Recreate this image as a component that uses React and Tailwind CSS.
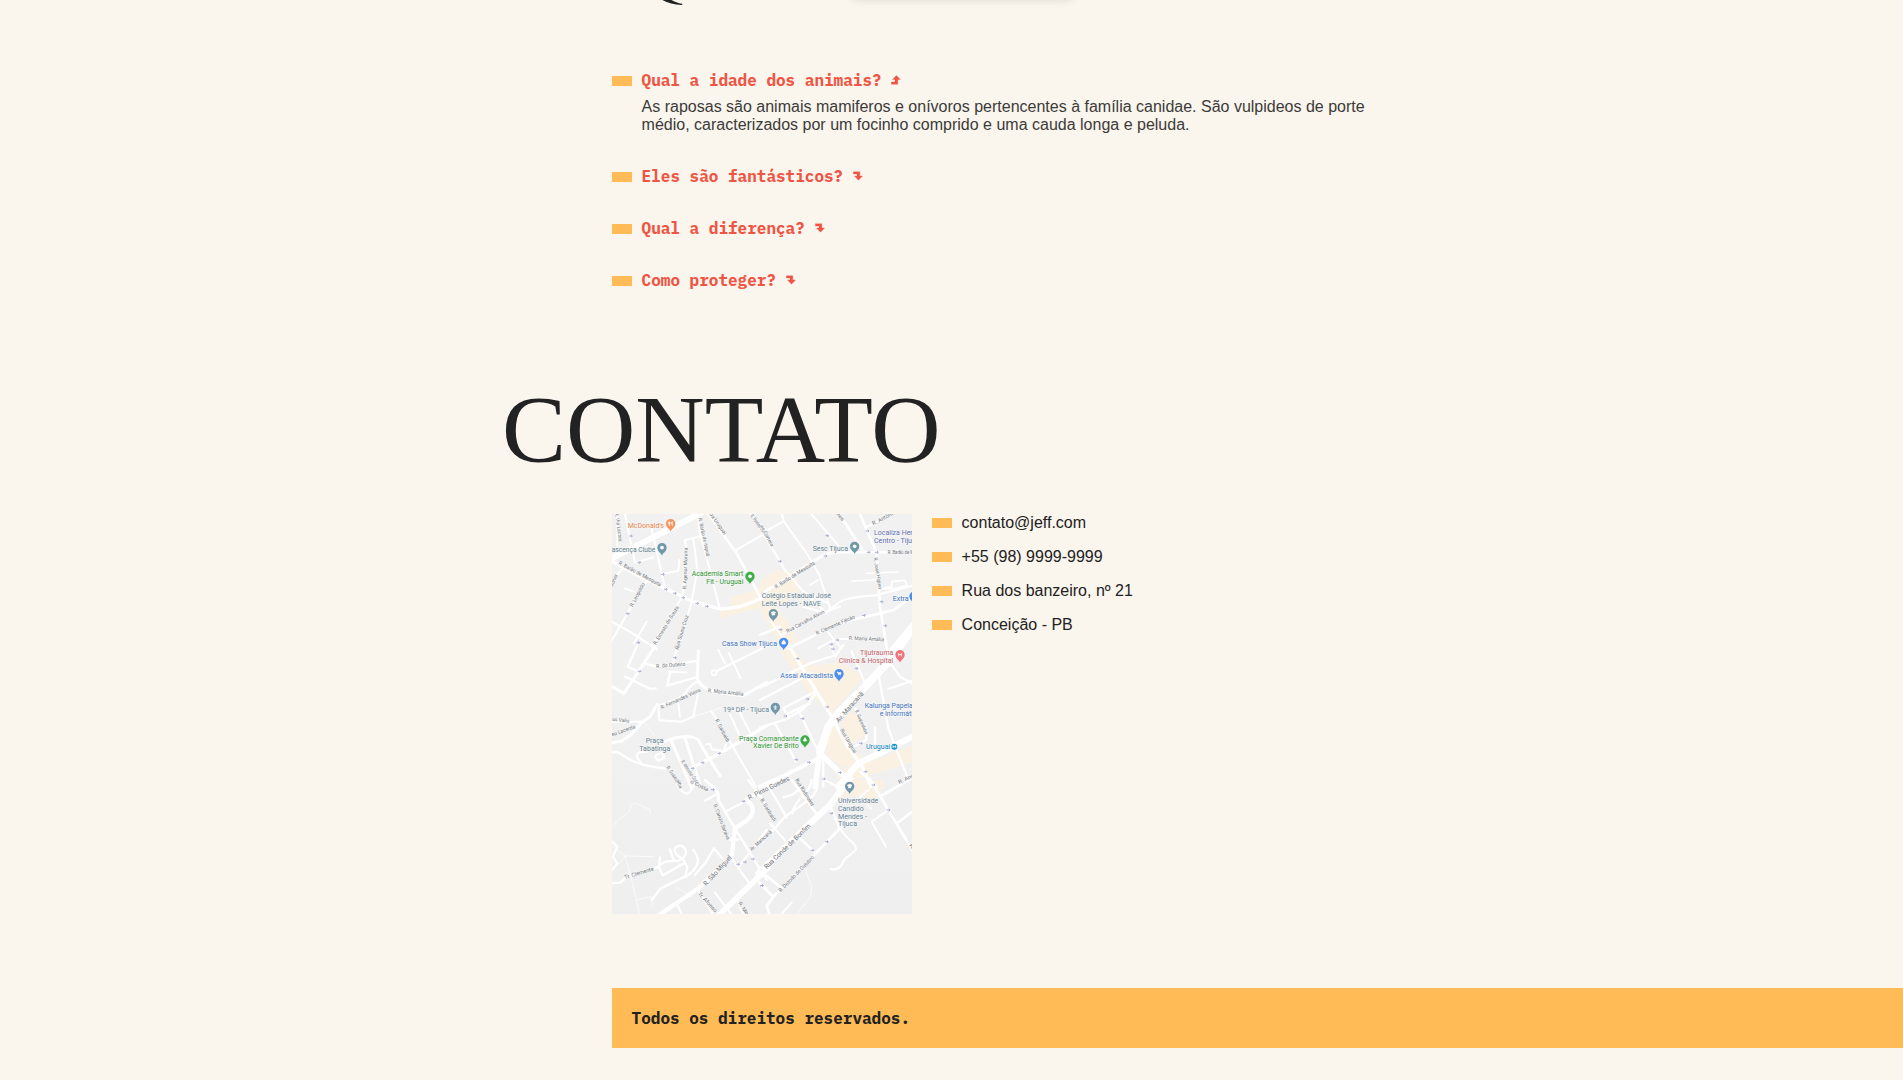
import React from 'react';

const SANS = 'font-["Liberation_Sans",Arial,sans-serif]';
const SERIF = 'font-["Liberation_Serif",serif]';
const MONO = 'font-["IBM_Plex_Mono","Liberation_Mono",monospace]';

/* Map tiles: every tile is drawn at three times its final size. */
const tiles = [
  {
    at: [-2, -4],
    land: ['330 300 330 325 465 290 465 228 400 250 360 263 362 285'],
    roads: [
      [18, 'M-5 150L100 97L275 8'],
      [10, 'M8 155L100 205L165 235L250 275L330 297C390 295 420 282 470 256'],
      [6, 'M22 10V110M45 12L75 158L130 142M125 58L165 235M165 190L205 183L208 150M225 90L270 80L263 10M225 90L229 120L218 258L125 410M250 85L262 180L245 275L203 420M264 20L268 60L330 297'],
      [8, 'M290 5L380 130L455 270'],
      [6, 'M375 122L470 68M418 8L470 64M112 208L5 392M45 235L85 250M5 335L60 365L140 418M110 335L72 400M0 220L30 185L45 170'],
    ],
  },
  {
    at: [148, -4],
    land: ['0 215 50 180 105 188 122 235 105 260 50 290 90 345 115 395 60 410 0 300'],
    roads: [
      [6, 'M-5 45L75 180L130 245L190 300M65 8L72 35L140 130L178 195L212 300M5 70L70 35M150 8L230 100L245 125M318 52L400 10M150 225L175 210M130 245L205 280M130 290L200 310'],
      [8, 'M15 245L150 160L200 130L250 126L470 128M235 8L312 126M298 8L350 128L360 290L382 425'],
      [5, 'M275 213L350 210M320 190L415 186M365 236L395 230L395 215L435 211L441 226L405 236Z'],
      [7, 'M215 296C240 270 255 262 345 256L470 224M0 375L60 350M70 372L215 298L240 290'],
      [8, 'M85 415L240 338L360 310L400 300L470 252'],
      [6, 'M203 365L245 415M175 415L210 395L240 386L380 392M30 330L90 415'],
      [22, 'M475 330L395 425'],
    ],
  },
  {
    at: [-2, 131],
    land: [],
    roads: [
      [7, 'M82 0L53 65L90 82M45 95L122 132L137 130M105 55L140 65L262 48M180 82L172 122L262 96M203 0L190 52M178 80L228 82'],
      [9, 'M138 0L42 145L2 122M265 18L262 100C270 130 300 142 400 152L470 112'],
      [6, 'M145 182C175 175 210 160 225 145Q240 120 265 108M145 182L148 226L215 230L250 215L265 140M205 175L210 215M2 230L95 230'],
      [2, 'M250 215L335 188M100 228L132 270'],
      [9, 'M142 178L120 215L98 230L62 270L35 288L2 294'],
      [6, 'M320 78L470 4M325 15L345 55M357 25L392 100'],
      [7, 'M2 325Q20 315 40 332Q85 365 180 372L210 425M95 355C70 330 78 320 110 320M140 330L157 323L163 338L145 347L136 336Z'],
      [9, 'M150 296C200 272 240 268 265 285L290 330L330 392M185 290L243 425M225 280L272 425'],
      [10, 'M240 372L330 325L470 242'],
      [6, 'M305 200L360 290L438 425M290 298L300 296L305 313L340 318L350 292M360 208L388 270M385 195L420 262'],
    ],
  },
  {
    at: [148, 131],
    land: [
      '60 20 90 0 130 45 160 62 240 50 310 95 250 165 215 205 150 150 110 90',
      '240 235 270 200 310 220 320 270 275 300 300 330 330 350 465 300 465 350 300 400 260 420 230 395 285 345',
      '195 300 225 235 290 345 250 370 205 335',
    ],
    roads: [
      [10, 'M85 0L215 215L260 300L310 370L332 425'],
      [7, 'M0 128L150 55L228 30L250 0M70 190L165 140M78 208L150 175M0 165L155 85M70 190L85 212M355 85L385 250L440 392M385 132L455 108M395 60L420 95L470 122M115 195L170 310M45 235L108 350M0 248L80 222L130 192L165 150M285 188L322 260L318 285L270 312M345 248L345 320M212 0L225 35M275 20L315 115M190 340L190 425M350 425L300 380'],
      [24, 'M475 -75L390 45L320 120L235 205L205 245L180 320'],
      [16, 'M180 315L165 425M180 325L250 392'],
      [19, 'M470 268L370 320L295 355L235 425'],
      [12, 'M0 425L80 388L175 340'],
      [6, 'M420 420L465 390'],
    ],
  },
  {
    at: [-2, 266],
    land: [],
    roads: [
      [7, 'M195 0C215 42 230 46 240 35L255 10M285 62L325 40M345 95L410 62M360 180L385 178M385 262L470 150M365 235L418 310M375 145L470 300M415 0L470 75'],
      [8, 'M285 0C305 20 330 30 325 60L375 145'],
      [13, 'M475 22L408 60C432 75 440 100 405 125L375 145L365 230L265 325L140 410'],
      [17, 'M320 412L475 262'],
      [6, 'M260 325L312 408M200 370L218 408M315 338L368 408M378 355L402 408M440 300L470 325'],
      [2, 'M10 140C30 100 65 110 62 75L75 70L120 88V102M45 228L130 230M10 200L45 228M20 260L45 228L65 300L88 400M80 360L122 350L128 380M195 320L245 350'],
      [7, 'M2 310L30 308L50 292L135 266L165 245L205 242C240 230 230 192 205 198C185 205 195 228 218 235L232 262L225 290L152 325L125 360M2 182L22 200L8 230L22 250L2 275M180 208L190 238M150 232L147 262L157 284M160 285L225 248M250 210C270 235 272 260 228 290M255 285L285 250L312 205L348 248'],
    ],
  },
  {
    at: [148, 266],
    land: ['195 75 260 0 370 0 372 20 330 75 305 45 250 50 215 85'],
    roads: [
      [7, 'M172 0C175 40 165 50 75 110L5 188M155 0C150 45 100 60 98 100M25 20L50 60L80 112M30 130L85 192M95 0L172 105M195 0L240 25M70 52L95 45L130 20'],
      [19, 'M-5 280L150 130L210 75L270 -5'],
      [8, 'M120 175L162 215M210 80L240 145M40 350L65 325L240 145L280 115M5 275L65 325M0 312L40 350L20 378L30 408'],
      [6, 'M240 145C260 180 292 190 287 210C270 230 250 230 245 255Q230 272 212 267M385 90L335 125L378 200M325 30L300 50L332 85M60 408L95 367'],
      [8, 'M328 -5L385 90L458 212M360 50L470 -15M410 130L470 85'],
      [2, 'M135 268L155 320L152 350L110 404'],
    ],
  },
];

const C = { slate: '#5f7f90', blue: '#3f74c0', green: '#2f9632', orange: '#e6854a', indigo: '#5f70b0', red: '#c05f66', cyan: '#0f85c0', street: '#6f7479' };

/* [tile, x, y, text, width, color, anchor] */
const places = [
  [0, 53, 53, "McDonald's", 109, C.orange],
  [0, 136, 125, 'ascença Clube', 131, C.slate, 'end'],
  [0, 400, 199, 'Academia Smart', 155, C.green, 'end'],
  [0, 400, 223, 'Fit - Uruguai', 111, C.green, 'end'],
  [1, 158, 122, 'Sesc Tijuca', 106, C.slate],
  [1, 342, 75, 'Localiza Hertz', 134, C.indigo],
  [1, 342, 98, 'Centro - Tijuca', 137, C.indigo],
  [1, 5, 265, 'Colégio Estadual José', 208, C.slate],
  [1, 5, 288, 'Leite Lopes - NAVE', 178, C.slate],
  [1, 398, 273, 'Extra', 48, C.blue],
  [1, 51, 409, 'Casa Show Tijuca', 165, C.blue, 'end'],
  [2, 107, 294, 'Praça', 54, C.slate],
  [2, 88, 317, 'Tabatinga', 93, C.slate],
  [3, 27, 200, '19ª DP - Tijuca', 138, C.slate, 'end'],
  [3, 116, 287, 'Praça Comandante', 179, C.green, 'end'],
  [3, 116, 309, 'Xavier De Brito', 137, C.green, 'end'],
  [3, 400, 31, 'Tijutrauma', 100, C.red, 'end'],
  [3, 400, 54, 'Clínica & Hospital', 164, C.red, 'end'],
  [3, 61, 99, 'Assaí Atacadista', 158, C.blue],
  [3, 314, 188, 'Kalunga Papelaria', 168, C.blue],
  [3, 359, 212, 'e Informática', 122, C.blue],
  [3, 318, 312, 'Uruguai', 73, C.cyan],
  [5, 234, 69, 'Universidade', 121, C.slate],
  [5, 234, 93, 'Candido', 77, C.slate],
  [5, 234, 116, 'Mendes -', 87, C.slate],
  [5, 234, 139, 'Tijuca', 57, C.slate],
];

/* [tile, x1, y1, x2, y2, name, size] */
const streets = [
  [0, 15, 8, 27, 95, 'R. Via Láctea', 15],
  [0, 25, 162, 150, 230, 'R. Barão de Mesquita', 16],
  [0, 229, 238, 233, 113, 'R. Agenor Moreira', 15],
  [0, 265, 25, 290, 140, 'R. Barão de Itapoã', 15],
  [0, 292, 5, 342, 75, 'Rua Uruguai', 16],
  [0, 68, 292, 105, 222, 'R. Leopoldo', 16],
  [0, 138, 405, 207, 292, 'R. Ernesto de Souza', 16],
  [0, 204, 418, 236, 318, 'Rua Sousa Cruz', 16],
  [0, 420, 18, 470, 85, 'R. Pontes Correia', 16],
  [0, 8, 230, 24, 195, 'Júnior', 16],
  [1, 0, 48, 33, 110, 'es Correia', 15],
  [1, 48, 236, 166, 162, 'R. Barão de Mesquita', 16],
  [1, 340, 46, 408, 10, 'R. Antônio', 16],
  [1, 383, 132, 475, 132, 'R. Barão de Mes', 15],
  [1, 341, 143, 356, 238, 'R. José Higino', 15],
  [1, 82, 369, 195, 309, 'Rua Carvalho Alvim', 16],
  [1, 170, 375, 286, 324, 'R. Clemente Falcão', 16],
  [1, 266, 389, 372, 394, 'R. Maria Amália', 16],
  [1, 228, 10, 246, 34, 'des', 15],
  [2, 139, 69, 226, 62, 'R. do Outeiro', 16],
  [2, 155, 193, 273, 139, 'R. Fernandes Vieira', 16],
  [2, 293, 142, 400, 152, 'R. Maria Amália', 16],
  [2, 6, 227, 58, 233, 'os Valis', 15],
  [2, 6, 274, 77, 249, 'eu Lacerda', 16],
  [2, 315, 226, 350, 292, 'R. Garibaldi', 16],
  [2, 212, 350, 260, 420, 'R. Amoroso Costa', 16],
  [2, 168, 368, 205, 420, 'R. Guaxupé', 16],
  [2, 205, 16, 212, 0, 'R.', 15],
  [3, 236, 234, 312, 147, 'Av. Maracanã', 20],
  [3, 285, 198, 316, 268, 'R. Guajaratuba', 15],
  [3, 240, 255, 282, 326, 'Rua Uruguai', 16],
  [3, 418, 417, 470, 392, 'R. Andr', 16],
  [4, 198, 0, 208, 26, 'olha', 15],
  [4, 240, 8, 292, 34, 'o Costa', 16],
  [4, 310, 75, 350, 180, 'R. Canuto Saraiva', 16],
  [4, 45, 297, 132, 271, 'Tr. Clemente', 16],
  [4, 289, 319, 366, 234, 'R. São Miguel', 20],
  [4, 263, 342, 315, 398, 'Tr. Afonso', 16],
  [4, 384, 370, 408, 405, 'R. Me', 16],
  [4, 425, 214, 486, 158, 'Av. Maracanã', 16],
  [4, 418, 60, 540, 0, 'R. Pinto Guedes', 20],
  [5, 0, 60, 40, 125, 'R. Garibaldi', 16],
  [5, 105, 0, 155, 80, 'Rua Radmaker', 16],
  [5, 20, 268, 153, 140, 'Rua Conde de Bonfim', 20],
  [5, 62, 337, 163, 233, 'R. Dezoito de Outubro', 16],
  [5, 448, 195, 458, 212, 'R.', 15],
];

/* [tile, x, y, color, mark] */
const pins = [
  [0, 182, 44, '#f5945b', 'fork'],
  [0, 156, 116, '#7197a9', 'dot'],
  [0, 420, 202, '#3fae49', 'dot'],
  [1, 284, 112, '#7197a9', 'dot'],
  [1, 40, 314, '#7197a9', 'cap'],
  [1, 71, 400, '#4c8df0', 'lock'],
  [1, 462, 262, '#4c8df0', 'dot'],
  [3, 420, 32, '#ee737b', 'H'],
  [3, 237, 89, '#4c8df0', 'cart'],
  [3, 46, 190, '#7197a9', 'star'],
  [3, 135, 288, '#3fae49', 'tree'],
  [5, 269, 22, '#7197a9', 'cap'],
];

const marks = {
  fork: 'M-4 -6V7M-6 -6V0H-2V-6M5 7V-6Q1 -3 3 1H5',
  cap: 'M-7 -3L0 -6L7 -3L0 0ZM-4 0V4H4V0',
  lock: 'M-5 -1H5V5H-5ZM-3 -1V-4Q0 -8 3 -4V-1',
  cart: 'M-7 -5H-4L-2 2H5L6 -3H-3M-2 6H-1M4 6H5',
  star: 'M-6 -1H6M0 -6V6M-4 5H4',
  tree: 'M0 -7L-5 2H5ZM0 2V6',
  H: 'M-4 -5V5M4 -5V5M-4 0H4',
};

/* [tile, x, y] one-way street markers */
const ticks = [
  [0, 62, 78], [0, 87, 157], [0, 158, 193], [0, 167, 238], [0, 194, 250], [0, 219, 263], [0, 261, 280], [0, 290, 289], [0, 52, 311], [0, 84, 398],
  [1, 201, 77], [1, 196, 138], [1, 59, 154], [1, 322, 63], [1, 325, 127], [1, 350, 127], [1, 364, 275], [1, 311, 316], [1, 375, 347], [1, 61, 359], [1, 231, 390], [1, 213, 403],
  [2, 88, 79], [2, 194, 38], [2, 327, 325], [2, 277, 353], [2, 247, 370],
  [3, 112, 41], [3, 218, 12], [3, 289, 70], [3, 142, 162], [3, 76, 213], [3, 127, 221], [3, 201, 186], [3, 302, 295], [3, 146, 352], [3, 108, 344], [3, 239, 383], [3, 191, 402], [3, 316, 380],
  [4, 308, 29], [4, 400, 64], [4, 384, 253], [4, 404, 246], [4, 428, 237], [4, 455, 317],
  [5, 340, 15], [5, 385, 90], [5, 214, 100], [5, 200, 185], [5, 157, 211], [5, 5, 317],
];

function tileMatrix(i) {
  const [x, y] = tiles[i].at;
  return `translate(${x} ${y}) scale(0.33333)`;
}

function StreetMap() {
  return (
    <svg className="block h-[400px] w-[300px] shrink-0" viewBox="0 0 300 400" role="img" aria-label="Mapa">
      <defs>
        <linearGradient id="ground" x1="0" y1="0" x2="0" y2="1">
          <stop offset="0.4" stopColor="#f1f1f2" />
          <stop offset="1" stopColor="#efefef" />
        </linearGradient>
      </defs>
      <rect width="300" height="400" fill="url(#ground)" />
      {tiles.map((t, i) => (
        <g key={i} transform={tileMatrix(i)} fill="#faf1e2">
          {t.land.map((p) => <polygon key={p} points={p} />)}
        </g>
      ))}
      {tiles.map((t, i) => (
        <g key={i} transform={tileMatrix(i)} fill="none" stroke="#fff" strokeLinecap="round" strokeLinejoin="round">
          {t.roads.map(([w, d]) => <path key={d} d={d} strokeWidth={w} />)}
        </g>
      ))}
      <circle cx="102" cy="158.7" r="2.4" fill="#f1f1f2" stroke="#fff" strokeWidth="1.6" />
      {ticks.map(([t, x, y]) => (
        <g key={`${t}-${x}-${y}`} transform={tileMatrix(t)}>
          <path d={`M${x - 5} ${y}h10m-4 -4l4 4l-4 4`} fill="none" stroke="#a9add0" strokeWidth="3" />
        </g>
      ))}
      <g className='font-["Roboto",sans-serif]'>
        {streets.map(([t, x1, y1, x2, y2, name, size]) => {
          const angle = (Math.atan2(y2 - y1, x2 - x1) * 180) / Math.PI;
          return (
            <g key={`${t}${x1}${name}`} transform={tileMatrix(t)}>
              <text
                transform={`translate(${x1} ${y1}) rotate(${angle})`}
                fontSize={size}
                textLength={Math.hypot(x2 - x1, y2 - y1)}
                lengthAdjust="spacingAndGlyphs"
                fill={C.street}
                stroke="#f8f8f8"
                strokeWidth="3"
                paintOrder="stroke"
              >
                {name}
              </text>
            </g>
          );
        })}
        {places.map(([t, x, y, name, width, color, anchor]) => (
          <g key={`${t}${y}${name}`} transform={tileMatrix(t)}>
            <text
              x={anchor === 'end' ? x - width : x}
              y={y}
              fontSize="20.5"
              textLength={width}
              lengthAdjust="spacingAndGlyphs"
              fill={color}
              stroke="#f8f8f8"
              strokeWidth="3"
              paintOrder="stroke"
            >
              {name}
            </text>
          </g>
        ))}
      </g>
      {pins.map(([t, x, y, color, mark]) => (
        <g key={`${t}${x}${y}`} transform={tileMatrix(t)}>
          <g transform={`translate(${x} ${y})`}>
            <path d="M0 21C-2 12 -14 9 -14 -3A14 14 0 0 1 14 -3C14 9 2 12 0 21Z" fill={color} />
            {mark === 'dot'
              ? <circle cy="-3" r="5.5" fill="#fff" />
              : <path d={marks[mark]} transform="translate(0 -3)" fill={mark === 'fork' || mark === 'H' || mark === 'star' ? 'none' : '#fff'} stroke="#fff" strokeWidth="2.4" />}
          </g>
        </g>
      ))}
      <g transform={tileMatrix(3)}>
        <circle cx="403" cy="305" r="9" fill="#1590c8" />
        <path d="M399 301v8m8 -8v8m-8 -4h8" stroke="#fff" strokeWidth="2.4" />
      </g>
    </svg>
  );
}

function Marker() {
  return <span className="mr-[9.6px] block h-[10px] w-5 shrink-0 bg-[#ffbb55]" />;
}

function Arrow({ open }) {
  return (
    <svg className="mb-[2px] ml-[9.8px] h-[10px] w-[10px] shrink-0" viewBox="0 0 10 10" fill="#ee5544" stroke="#ee5544" strokeWidth="0.3">
      {open
        ? <path d="M0.4 9.3V7H4V4.6H1.4L5.4 0.6L9.5 4.6H6.8V9.3Z" />
        : <path d="M0.4 0.7H6.8V5H9.5L5.5 9.2L1.5 5H4V3H0.4Z" />}
    </svg>
  );
}

function Question({ children, open, answer }) {
  return (
    <div>
      <button className={`${MONO} flex h-5 items-center text-[16px] leading-5 font-bold whitespace-pre text-[#ee5544]`}>
        <Marker />
        <span className="mb-[2px]">{children}</span>
        <Arrow open={open} />
      </button>
      {answer && (
        <p className="mt-[7px] mb-[33px] ml-[29.6px] w-[740px] text-[16px] leading-[18px] text-[#3c3b3a]">{answer}</p>
      )}
    </div>
  );
}

export default function App() {
  const contacts = ['contato@jeff.com', '+55 (98) 9999-9999', 'Rua dos banzeiro, nº 21', 'Conceição - PB'];
  return (
    <main className={`${SANS} relative flex h-[1080px] w-full flex-col overflow-hidden bg-[#faf5ed] text-[#222222]`}>
      <div className="absolute -top-[61px] left-[851px] h-[60px] w-[222px] rounded-[4px] bg-white shadow-[0_0_10px_rgba(0,0,0,0.14)]" />
      <svg className="ml-[660px] h-[6px] w-[24px] shrink-0" viewBox="0 0 24 6" fill="#222222">
        <path d="M2.3 0H11.5C14.5 1.8 18 3.2 22.2 3.8V4.9C14.5 5 8 3 2.3 0Z" />
      </svg>
      <section className="mt-[65px] ml-[612px] flex flex-col">
        <Question
          open
          answer="As raposas são animais mamiferos e onívoros pertencentes à família canidae. São vulpideos de porte médio, caracterizados por um focinho comprido e uma cauda longa e peluda."
        >
          Qual a idade dos animais?
        </Question>
        <div className="flex flex-col gap-8">
          <Question>Eles são fantásticos?</Question>
          <Question>Qual a diferença?</Question>
          <Question>Como proteger?</Question>
        </div>
      </section>
      <h2 className={`${SERIF} mt-[84px] ml-[502px] h-[110px] text-[96px] leading-[110px]`}>CONTATO</h2>
      <section className="mt-[29px] ml-[612px] flex gap-5">
        <StreetMap />
        <ul className="flex flex-col gap-4">
          {contacts.map((c) => (
            <li key={c} className="flex h-[18px] items-center text-[16px] leading-[18px]">
              <Marker />
              <span>{c}</span>
            </li>
          ))}
        </ul>
      </section>
      <footer className={`${MONO} mt-[74px] ml-[612px] flex h-[60px] items-center bg-[#ffbb55] pl-[19.6px] text-[16px] font-bold`}>
        Todos os direitos reservados.
      </footer>
    </main>
  );
}
